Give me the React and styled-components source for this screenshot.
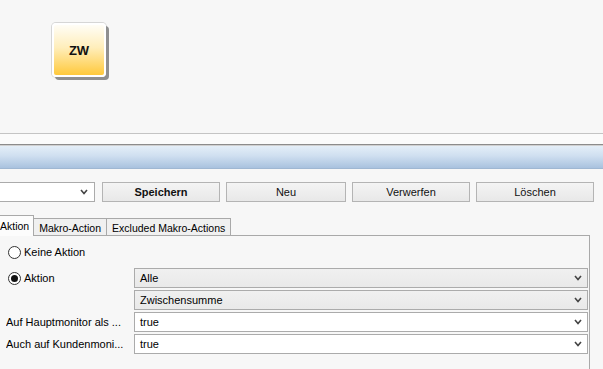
import React from "react";
import styled, { createGlobalStyle } from "styled-components";

const Global = createGlobalStyle`
  html, body { margin: 0; padding: 0; background: #f7f7f7; overflow: hidden; }
  body { font-family: "Liberation Sans", Arial, sans-serif; font-size: 11px; color: #000; }
  * { box-sizing: border-box; }
`;

const Page = styled.div`
  width: 603px;
  height: 369px;
  overflow: hidden;
  display: flex;
  flex-direction: column;
`;

const Canvas = styled.div`
  height: 133px;
  padding: 23px 0 0 52px;
`;

const KeyButton = styled.div`
  width: 54px;
  height: 54px;
  border: 2px solid #ffffff;
  border-radius: 4px;
  background: linear-gradient(#fffdf6 0%, #ffeebb 45%, #ffc93c 100%);
  box-shadow: 3px 3px 0 #8f8f8f, 0 0 0 1px #d6d6d6;
  display: flex;
  align-items: center;
  justify-content: center;
  font-weight: bold;
  font-size: 13px;
  color: #111;
`;

const Splitter = styled.div`
  height: 11px;
  border-top: 1px solid #c4c4c4;
  background: #fbfbfb;
`;

const DarkLine = styled.div`
  height: 2px;
  background: #8c8c8c;
  border-bottom: 1px solid #d0d0d0;
`;

const Band = styled.div`
  height: 23px;
  background: linear-gradient(#e4eef8 0%, #cfdff0 45%, #a9c2de 100%);
  border-bottom: 1px solid #9fb7d2;
`;

const Toolbar = styled.div`
  display: flex;
  gap: 6px;
  margin: 13px 0 0 -100px;
  height: 20px;
`;

const Combo = styled.div`
  width: 195px;
  height: 20px;
  background: #fff;
  border: 1px solid #ababab;
  display: flex;
  align-items: center;
  justify-content: flex-end;
  padding-right: 6px;
  margin-right: 1px;
`;

const Btn = styled.div`
  width: ${(p) => p.w}px;
  height: 20px;
  border: 1px solid #b4b4b4;
  background: linear-gradient(#f4f4f4, #e8e8e8);
  display: flex;
  align-items: center;
  justify-content: center;
  font-weight: ${(p) => (p.bold ? "bold" : "normal")};
  color: #111;
`;

const TabBar = styled.div`
  display: flex;
  align-items: flex-end;
  margin: 13px 0 0 -5px;
  height: 21px;
  position: relative;
  z-index: 1;
`;

const Tab = styled.div`
  height: ${(p) => (p.active ? 21 : 18)}px;
  padding: 0 ${(p) => (p.active ? 4 : 5)}px;
  font-size: 10.5px;
  display: flex;
  align-items: center;
  border: 1px solid #a9a9a9;
  border-bottom: ${(p) => (p.active ? "none" : "1px solid #a9a9a9")};
  background: ${(p) => (p.active ? "#fcfcfc" : "#f0f0f0")};
  margin-left: ${(p) => (p.first ? 0 : -1)}px;
  padding-top: ${(p) => (p.active ? 0 : 1)}px;
`;

const Panel = styled.div`
  margin: -1px 0 0 -10px;
  width: 600px;
  flex: 1;
  border: 1px solid #a9a9a9;
  border-bottom: none;
  padding: 6px 1px 0 15px;
  display: flex;
  flex-direction: column;
`;

const RadioRow = styled.div`
  display: flex;
  align-items: center;
  height: 20px;
  margin-top: ${(p) => p.mt || 0}px;
`;

const RadioLabel = styled.label`
  display: flex;
  align-items: center;
  gap: 3px;
  width: 128px;
  padding-left: 2px;
`;

const Circle = styled.span`
  width: 13px;
  height: 13px;
  border-radius: 50%;
  border: 1px solid #333;
  background: #fff;
  display: flex;
  align-items: center;
  justify-content: center;
  &::after {
    content: "";
    display: ${(p) => (p.checked ? "block" : "none")};
    width: 7px;
    height: 7px;
    border-radius: 50%;
    background: #111;
  }
`;

const FieldRow = styled.div`
  display: flex;
  align-items: center;
  height: 20px;
  margin-top: 2px;
`;

const FieldLabel = styled.div`
  width: 128px;
  white-space: nowrap;
  overflow: hidden;
`;

const Select = styled.div`
  flex: 1;
  height: 20px;
  border: 1px solid #ababab;
  background: ${(p) => (p.disabled ? "linear-gradient(#f0f0f0, #e9e9e9)" : "#fff")};
  display: flex;
  align-items: center;
  justify-content: space-between;
  padding: 0 5px 0 5px;
`;

const Chevron = () => (
  <svg width="8" height="6" viewBox="0 0 8 6">
    <polyline points="1,1 4,4.5 7,1" fill="none" stroke="#444" strokeWidth="1.6" />
  </svg>
);

export default function App() {
  return (
    <Page>
      <Global />
      <Canvas>
        <KeyButton>ZW</KeyButton>
      </Canvas>
      <Splitter />
      <DarkLine />
      <Band />
      <Toolbar>
        <Combo>
          <Chevron />
        </Combo>
        <Btn w={118} bold>Speichern</Btn>
        <Btn w={120}>Neu</Btn>
        <Btn w={118}>Verwerfen</Btn>
        <Btn w={118}>Löschen</Btn>
      </Toolbar>
      <TabBar>
        <Tab active first>Aktion</Tab>
        <Tab>Makro-Action</Tab>
        <Tab>Excluded Makro-Actions</Tab>
      </TabBar>
      <Panel>
        <RadioRow>
          <RadioLabel>
            <Circle />
            Keine Aktion
          </RadioLabel>
        </RadioRow>
        <RadioRow mt={6}>
          <RadioLabel>
            <Circle checked />
            Aktion
          </RadioLabel>
          <Select disabled>
            Alle
            <Chevron />
          </Select>
        </RadioRow>
        <FieldRow>
          <FieldLabel />
          <Select disabled>
            Zwischensumme
            <Chevron />
          </Select>
        </FieldRow>
        <FieldRow>
          <FieldLabel>Auf Hauptmonitor als ...</FieldLabel>
          <Select>
            true
            <Chevron />
          </Select>
        </FieldRow>
        <FieldRow>
          <FieldLabel>Auch auf Kundenmoni...</FieldLabel>
          <Select>
            true
            <Chevron />
          </Select>
        </FieldRow>
      </Panel>
    </Page>
  );
}
